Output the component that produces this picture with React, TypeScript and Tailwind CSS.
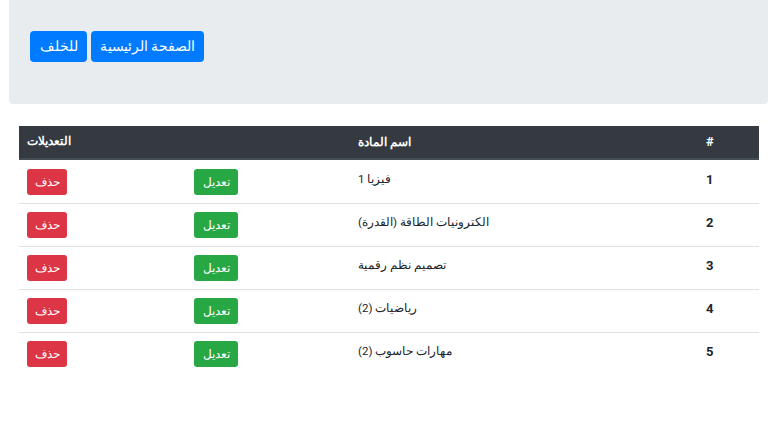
const subjects = [
  { id: 1, name: 'فيزيا 1' },
  { id: 2, name: 'الكترونيات الطاقة (القدرة)' },
  { id: 3, name: 'تصميم نظم رقمية' },
  { id: 4, name: 'رياضيات (2)' },
  { id: 5, name: 'مهارات حاسوب (2)' },
];

const font = { fontFamily: 'Roboto, "Liberation Sans", sans-serif' };

export default function App() {
  return (
    <div className="min-h-[440px] bg-white text-[#212529]" style={font}>
      {/* Top bar */}
      <div className="ml-[9px] mr-[3px] h-[104px] rounded-b bg-[#e9ecef] pl-[21px] pt-[31px]">
        <div className="flex gap-[4px]">
          <button className="flex h-[31px] w-[57px] items-center justify-center rounded bg-[#007bff] text-[14px] text-white">
            للخلف
          </button>
          <button className="flex h-[31px] w-[113px] items-center justify-center rounded bg-[#007bff] text-[14px] text-white">
            الصفحة الرئيسية
          </button>
        </div>
      </div>

      {/* Subjects table */}
      <div dir="rtl" className="ml-[19px] mt-[22px] w-[740px] text-[12px]">
        <div className="flex h-[34px] items-center border-b-2 border-[#454d55] bg-[#343a40] font-bold text-white">
          <div className="w-[61px] pl-2 text-left text-[13px]">#</div>
          <div className="w-[348px] pl-2 text-left">اسم المادة</div>
          <div className="flex-1 pl-2 text-left text-[11.5px]">التعديلات</div>
        </div>
        {subjects.map((s, i) => (
          <div
            key={s.id}
            className={
              i === 0
                ? 'flex h-[43px] items-start pt-[9px]'
                : 'flex h-[43px] items-start border-t border-[#dee2e6] pt-[8px]'
            }
          >
            <div className="w-[61px] pl-2 text-left text-[13px] leading-[22px] font-bold">{s.id}</div>
            <div className="w-[348px] pl-2 text-left text-[11.5px] leading-[20px]">{s.name}</div>
            <div className="flex w-[164px] justify-start pl-2" dir="ltr">
              <button className="h-[26px] w-[44px] rounded-[3px] bg-[#28a745] text-[12px] text-white">
                تعديل
              </button>
            </div>
            <div className="flex flex-1 justify-start pl-2" dir="ltr">
              <button className="h-[26px] w-[40px] rounded-[3px] bg-[#dc3545] text-[12px] text-white">
                حذف
              </button>
            </div>
          </div>
        ))}
      </div>
    </div>
  );
}
